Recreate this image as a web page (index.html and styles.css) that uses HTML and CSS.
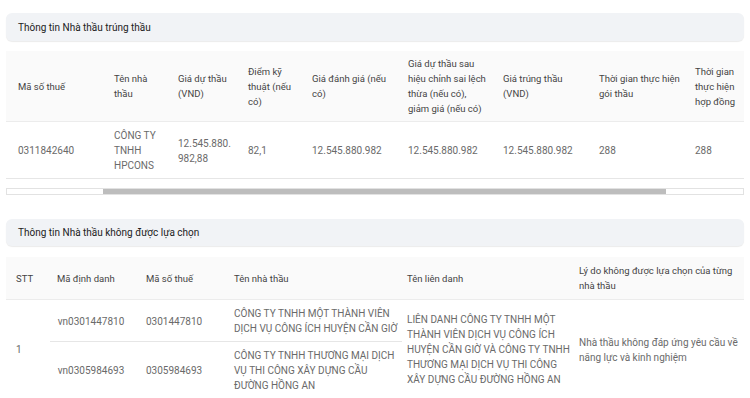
FILE: index.html
```html
<!DOCTYPE html>
<html lang="vi">
<head>
<meta charset="utf-8">
<title>Thông tin Nhà thầu</title>
<link rel="stylesheet" href="styles.css">
</head>
<body>
<div class="page">
  <section class="panel">
    <div class="panel-title">Thông tin Nhà thầu trúng thầu</div>
    <div class="scroll">
      <table class="tbl t1">
        <colgroup>
          <col style="width:96px"><col style="width:64px"><col style="width:70px"><col style="width:64px"><col style="width:96px"><col style="width:95px"><col style="width:96px"><col style="width:96px"><col style="width:66px">
        </colgroup>
        <thead>
          <tr>
            <th>Mã số thuế</th>
            <th>Tên nhà thầu</th>
            <th>Giá dự thầu (VND)</th>
            <th>Điểm kỹ thuật (nếu có)</th>
            <th>Giá đánh giá (nếu có)</th>
            <th>Giá dự thầu sau hiệu chỉnh sai lệch thừa (nếu có), giảm giá (nếu có)</th>
            <th>Giá trúng thầu (VND)</th>
            <th>Thời gian thực hiện gói thầu</th>
            <th>Thời gian thực hiện hợp đồng</th>
          </tr>
        </thead>
        <tbody>
          <tr>
            <td>0311842640</td>
            <td>CÔNG TY TNHH HPCONS</td>
            <td>12.545.880.<wbr>982,88</td>
            <td>82,1</td>
            <td>12.545.880.982</td>
            <td>12.545.880.982</td>
            <td>12.545.880.982</td>
            <td>288</td>
            <td>288</td>
          </tr>
        </tbody>
      </table>
    </div>
    <div class="scrollbar"><div class="thumb"></div></div>
  </section>

  <section class="panel panel-2">
    <div class="panel-title">Thông tin Nhà thầu không được lựa chọn</div>
    <table class="tbl t2">
      <colgroup>
        <col style="width:44px"><col style="width:90px"><col style="width:88px"><col style="width:174px"><col style="width:171px"><col style="width:171px">
      </colgroup>
      <thead>
        <tr>
          <th class="c-stt">STT</th>
          <th class="c-id">Mã định danh</th>
          <th>Mã số thuế</th>
          <th>Tên nhà thầu</th>
          <th class="c-jv">Tên liên danh</th>
          <th>Lý do không được lựa chọn của từng nhà thầu</th>
        </tr>
      </thead>
      <tbody>
        <tr>
          <td class="c-stt" rowspan="2">1</td>
          <td class="c-id">vn0301447810</td>
          <td>0301447810</td>
          <td>CÔNG TY TNHH MỘT THÀNH VIÊN DỊCH VỤ CÔNG ÍCH HUYỆN CẦN GIỜ</td>
          <td class="c-jv" rowspan="2">LIÊN DANH CÔNG TY TNHH MỘT THÀNH VIÊN DỊCH VỤ CÔNG ÍCH HUYỆN CẦN GIỜ VÀ CÔNG TY TNHH THƯƠNG MẠI DỊCH VỤ THI CÔNG XÂY DỰNG CẦU ĐƯỜNG HỒNG AN</td>
          <td rowspan="2">Nhà thầu không đáp ứng yêu cầu về năng lực và kinh nghiệm</td>
        </tr>
        <tr>
          <td class="c-id">vn0305984693</td>
          <td>0305984693</td>
          <td>CÔNG TY TNHH THƯƠNG MẠI DỊCH VỤ THI CÔNG XÂY DỰNG CẦU ĐƯỜNG HỒNG AN</td>
        </tr>
      </tbody>
    </table>
  </section>
</div>
</body>
</html>
```

FILE: styles.css
```css
* { box-sizing: border-box; }
html, body { margin: 0; padding: 0; background: #fff; }
body {
  font-family: Roboto, "Liberation Sans", "Noto Sans", sans-serif;
  font-size: 10px;
  line-height: 15px;
  color: #666;
}
.page {
  padding: 13px 6px 0 6px;
}
.panel-title {
  height: 28px;
  padding: 0 12px;
  display: flex;
  align-items: center;
  background: #f1f3f6;
  border-radius: 6px;
  box-shadow: 0 1px 1px rgba(0,0,0,0.08);
  color: #222;
  font-size: 10px;
}
.scroll {
  margin-top: 10px;
  overflow: hidden;
  width: 100%;
}
.tbl {
  border-collapse: collapse;
  table-layout: fixed;
}
.t1 { width: 743px; }
.t2 { width: 100%; margin-top: 11px; }
.tbl th {
  background: #fafafa;
  color: #444;
  font-size: 9.5px;
  font-weight: 400;
  text-align: left;
  padding: 5px 2px 5px 12px;
  vertical-align: middle;
  border-bottom: 1px solid #ececec;
}
.tbl td {
  padding: 6px 2px 5px 12px;
  vertical-align: middle;
  border-bottom: 1px solid #e6e6e6;
  color: #6a6a6a;
}
.t2 th, .t2 td { padding-left: 6px; padding-right: 0; }
.t2 th { padding-top: 6px; padding-bottom: 6px; }
.t2 .c-stt { padding-left: 10px; }
.t2 th.c-id { padding-left: 7px; }
.t2 td.c-id { text-align: center; padding-left: 0; padding-right: 8px; }
.t2 .c-jv { padding-left: 5px; }
.scrollbar {
  margin-top: 9px;
  height: 7px;
  border: 1px solid #e2e2e2;
  background: #fff;
}
.thumb {
  margin-left: 96px;
  width: 563px;
  height: 5px;
  background: #bdbdbd;
}
.panel-2 { margin-top: 24px; }
.panel-2 .panel-title { height: 27px; }
```
